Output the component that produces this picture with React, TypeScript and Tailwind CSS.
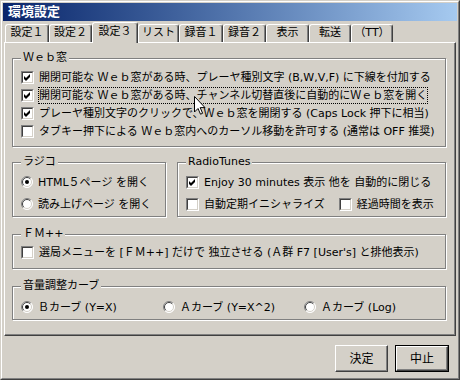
import React from "react";

const Check = ({ checked }: { checked?: boolean }) => (
  <div className="w-[13px] h-[13px] shrink-0 border border-t-[#808080] border-l-[#808080] border-r-white border-b-white">
    <div className="w-full h-full border border-t-[#404040] border-l-[#404040] border-r-[#d4d0c8] border-b-[#d4d0c8] bg-white flex items-center justify-center">
      {checked && (
        <svg width="7" height="7" viewBox="0 0 7 7">
          <path d="M0 2L2 4L6 0V3L2 7L0 5Z" fill="#000" />
        </svg>
      )}
    </div>
  </div>
);

const Radio = ({ checked }: { checked?: boolean }) => (
  <svg width="12" height="12" viewBox="0 0 12 12" className="shrink-0">
    <circle cx="6" cy="6" r="5.5" fill="#fff" />
    <path d="M2.1 9.9A5.5 5.5 0 0 1 9.9 2.1" stroke="#808080" fill="none" />
    <path d="M9.9 2.1A5.5 5.5 0 0 1 2.1 9.9" stroke="#ffffff" fill="none" />
    <path d="M2.8 9.2A4.5 4.5 0 0 1 9.2 2.8" stroke="#404040" fill="none" />
    <path d="M9.2 2.8A4.5 4.5 0 0 1 2.8 9.2" stroke="#d4d0c8" fill="none" />
    {checked && <circle cx="6" cy="6" r="2" fill="#000" />}
  </svg>
);

const CheckRow = ({ checked, text, focus }: { checked?: boolean; text: string; focus?: boolean }) => (
  <div className="flex items-center h-[18px]">
    <Check checked={checked} />
    <span
      className={
        focus
          ? "ml-[4px] border border-dotted border-black px-[0px] leading-[15px] whitespace-nowrap"
          : "ml-[4px] border border-transparent px-[0px] leading-[15px] whitespace-nowrap"
      }
    >
      {text}
    </span>
  </div>
);

const RadioItem = ({ checked, text }: { checked?: boolean; text: string }) => (
  <div className="flex items-center">
    <Radio checked={checked} />
    <span className="ml-[5px] leading-[15px] whitespace-nowrap">{text}</span>
  </div>
);

const Group = ({ label, className, children }: { label: string; className: string; children: React.ReactNode }) => (
  <div className={"relative border border-[#808080] shadow-[inset_1px_1px_0_#fff,1px_1px_0_#fff] " + className}>
    <span className="absolute -top-[8px] left-[8px] bg-[#d4d0c8] px-[2px] leading-[14px] whitespace-nowrap">{label}</span>
    {children}
  </div>
);

const Tab = ({ label, w, selected }: { label: string; w: string; selected?: boolean }) => (
  <div
    className={
      selected
        ? `${w} h-[21px] -mb-[1px] relative z-10 bg-[#d4d0c8] flex items-center justify-center pb-[2px] border-t border-l border-r border-t-white border-l-white border-r-[#404040] rounded-t-[3px] shadow-[inset_-1px_0_0_#808080]`
        : `${w} h-[18px] flex items-center justify-center border-t border-l border-r border-t-white border-l-white border-r-[#404040] rounded-t-[3px] shadow-[inset_-1px_0_0_#808080]`
    }
  >
    {label}
  </div>
);

export default function App() {
  return (
    <div className="w-[460px] h-[380px] bg-[#d4d0c8] border border-t-[#d4d0c8] border-l-[#d4d0c8] border-r-[#404040] border-b-[#404040] text-black text-[11px] font-['DejaVu_Sans','Noto_Sans_CJK_JP',sans-serif]">
      <div className="h-full border border-t-white border-l-white border-r-[#808080] border-b-[#808080] p-[1px] flex flex-col">
        <div className="h-[18px] shrink-0 bg-linear-to-r from-[#0a246a] to-[#a6caf0] flex items-center pl-[5px] text-white font-bold text-[13px]">
          環境設定
        </div>
        <div className="h-[21px] shrink-0 flex items-end pl-[2px]">
          <Tab label="設定１" w="w-[44px]" />
          <Tab label="設定２" w="w-[43px]" />
          <Tab label="設定３" w="w-[46px]" selected />
          <Tab label="リスト" w="w-[41px]" />
          <Tab label="録音１" w="w-[44px]" />
          <Tab label="録音２" w="w-[43px]" />
          <Tab label="表示" w="w-[43px]" />
          <Tab label="転送" w="w-[42px]" />
          <Tab label="（TT）" w="w-[42px]" />
        </div>
        <div className="ml-[1px] w-[452px] h-[294px] shrink-0 border border-t-white border-l-white border-r-[#404040] border-b-[#404040] shadow-[inset_-1px_-1px_0_#808080] pl-[7px] pr-[9px] pt-[15px] flex flex-col">
          <Group label="Ｗｅｂ窓" className="h-[89px] pl-[8px] pt-[9px] flex flex-col">
            <CheckRow checked text="開閉可能な Ｗｅｂ窓がある時、プレーヤ種別文字 (B,W,V,F) に下線を付加する" />
            <CheckRow checked focus text="開閉可能な Ｗｅｂ窓がある時、チャンネル切替直後に自動的にＷｅｂ窓を開く" />
            <CheckRow checked text="プレーヤ種別文字のクリックで、Ｗｅｂ窓を開閉する (Caps Lock 押下に相当)" />
            <CheckRow text="タブキー押下による Ｗｅｂ窓内へのカーソル移動を許可する (通常は OFF 推奨)" />
            <svg className="absolute left-[181px] top-[37px]" width="12" height="19" viewBox="0 0 12 19">
              <path d="M0.5 0.5V16L4 12.5L6.5 18.2L8.6 17.3L6.2 11.6H11Z" fill="#fff" stroke="#000" strokeLinejoin="miter" />
            </svg>
          </Group>
          <div className="flex mt-[15px] gap-[11px]">
            <Group label="ラジコ" className="w-[154px] h-[55px] pl-[8px] pt-[8px] flex flex-col">
              <div className="h-[22px] flex items-center">
                <RadioItem checked text="HTML５ページ を開く" />
              </div>
              <div className="h-[22px] flex items-center">
                <RadioItem text="読み上げページ を開く" />
              </div>
            </Group>
            <Group label="RadioTunes" className="flex-1 h-[55px] pl-[8px] pt-[8px] flex flex-col">
              <div className="h-[22px] flex items-center">
                <CheckRow checked text="Enjoy 30 minutes 表示 他を 自動的に閉じる" />
              </div>
              <div className="h-[22px] flex items-center">
                <CheckRow text="自動定期イニシャライズ" />
                <div className="ml-[13px]">
                  <CheckRow text="経過時間を表示" />
                </div>
              </div>
            </Group>
          </div>
          <Group label="ＦＭ++" className="mt-[17px] h-[35px] pl-[8px] pt-[8px]">
            <CheckRow text="選局メニューを [ＦＭ++] だけで 独立させる (Ａ群 F7 [User's] と排他表示)" />
          </Group>
          <Group label="音量調整カーブ" className="mt-[17px] h-[34px] pl-[8px] pt-[11px] flex">
            <div className="w-[142px] h-[18px] flex items-center">
              <RadioItem checked text="Ｂカーブ (Y=X)" />
            </div>
            <div className="w-[141px] h-[18px] flex items-center">
              <RadioItem text="Ａカーブ (Y=X^2)" />
            </div>
            <div className="h-[18px] flex items-center">
              <RadioItem text="Ａカーブ (Log)" />
            </div>
          </Group>
        </div>
        <div className="flex justify-end gap-[7px] pr-[8px] mt-[9px] text-[12px]">
          <div className="w-[53px] h-[27px] flex items-center justify-center border border-t-white border-l-white border-r-[#404040] border-b-[#404040] shadow-[inset_-1px_-1px_0_#808080]">
            決定
          </div>
          <div className="w-[54px] h-[27px] border border-black">
            <div className="w-full h-full flex items-center justify-center border border-t-white border-l-white border-r-[#404040] border-b-[#404040] shadow-[inset_-1px_-1px_0_#808080]">
              中止
            </div>
          </div>
        </div>
      </div>
    </div>
  );
}
